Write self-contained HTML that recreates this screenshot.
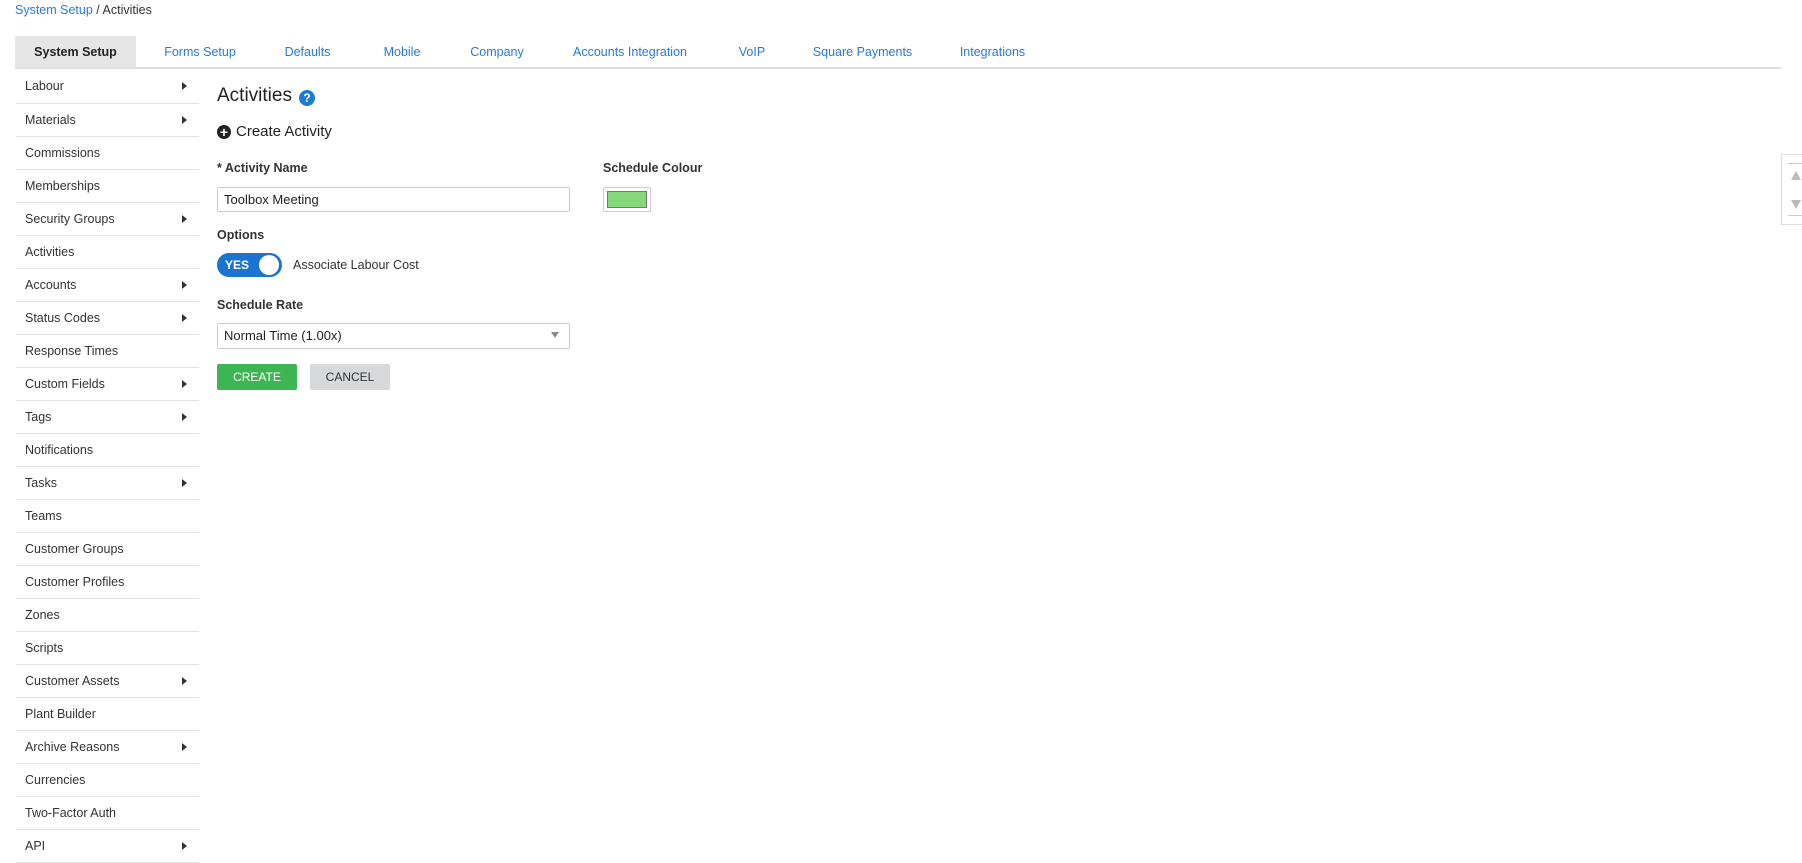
<!DOCTYPE html>
<html><head><meta charset="utf-8"><style>
*{box-sizing:border-box;margin:0;padding:0}
body{width:1802px;height:860px;overflow:hidden;background:#fff;font-family:"Liberation Sans",Arial,sans-serif;font-size:12.5px;color:#333;position:relative}
.a{position:absolute}
.bc{left:15px;top:3px;font-size:12.5px}
.bc span{color:#2a7ad5}
.tab{top:36px;height:32px;line-height:32px;font-size:12.5px;color:#2a7ad5;text-align:center}
.tabline{left:15px;top:67px;width:1766px;height:2px;background:#e0e0e0}
.side{left:16px;top:68px;width:183px}
.side div{height:33px;line-height:32px;border-bottom:1.5px solid #e3e3e3;padding-left:9px;position:relative;font-size:12.5px;color:#333}
.side div:first-child{height:36px;line-height:36px}
.side div.ar:after{content:"";position:absolute;left:166px;top:50%;margin-top:-4px;border-left:5px solid #333;border-top:4px solid transparent;border-bottom:4px solid transparent}
.lbl{font-weight:bold;font-size:12.5px;color:#333}
.inp{border:1px solid #ccc;border-radius:2px;height:25px;line-height:23px;padding-left:6px;font-size:13px;color:#222}
</style></head><body>
<div class="a bc"><span>System Setup</span> / Activities</div>
<div class="a" style="left:15px;top:36px;width:121px;height:32px;background:#e6e6e6"></div>
<div class="a tab" style="left:15px;width:121px;color:#222;font-weight:bold">System Setup</div>
<div class="a tab" style="left:160px;width:80px">Forms Setup</div>
<div class="a tab" style="left:280px;width:55px">Defaults</div>
<div class="a tab" style="left:377px;width:50px">Mobile</div>
<div class="a tab" style="left:465px;width:64px">Company</div>
<div class="a tab" style="left:570px;width:120px">Accounts Integration</div>
<div class="a tab" style="left:733px;width:38px">VoIP</div>
<div class="a tab" style="left:810px;width:105px">Square Payments</div>
<div class="a tab" style="left:955px;width:75px">Integrations</div>
<div class="a tabline"></div>
<div class="a side">
<div class="ar">Labour</div><div class="ar">Materials</div><div>Commissions</div><div>Memberships</div><div class="ar">Security Groups</div><div>Activities</div><div class="ar">Accounts</div><div class="ar">Status Codes</div><div>Response Times</div><div class="ar">Custom Fields</div><div class="ar">Tags</div><div>Notifications</div><div class="ar">Tasks</div><div>Teams</div><div>Customer Groups</div><div>Customer Profiles</div><div>Zones</div><div>Scripts</div><div class="ar">Customer Assets</div><div>Plant Builder</div><div class="ar">Archive Reasons</div><div>Currencies</div><div>Two-Factor Auth</div><div class="ar">API</div>
</div>
<div class="a" style="left:217px;top:85px;font-size:19px;color:#222">Activities</div>
<div class="a" style="left:299px;top:90px;width:16px;height:16px;border-radius:50%;background:#1e7bd2;color:#fff;font-weight:bold;font-size:12px;text-align:center;line-height:16px">?</div>
<div class="a" style="left:217px;top:125px;width:14px;height:14px;border-radius:50%;background:#222;color:#fff;font-weight:bold;font-size:14px;text-align:center;line-height:14px">+</div>
<div class="a" style="left:236px;top:123px;font-size:15px;color:#222">Create Activity</div>
<div class="a lbl" style="left:217px;top:161px">* Activity Name</div>
<div class="a inp" style="left:217px;top:187px;width:353px">Toolbox Meeting</div>
<div class="a lbl" style="left:603px;top:161px">Schedule Colour</div>
<div class="a" style="left:603px;top:187px;width:48px;height:25px;border:1px solid #ccc;border-radius:2px;padding:3px"><div style="width:100%;height:100%;background:#86d97a;border:1px solid #777"></div></div>
<div class="a lbl" style="left:217px;top:228px">Options</div>
<div class="a" style="left:217px;top:253px;width:65px;height:24px;border-radius:12px;background:#1b74d0;color:#fff;font-weight:bold;font-size:12px;line-height:24px;padding-left:8px">YES</div>
<div class="a" style="left:259px;top:255px;width:20px;height:20px;border-radius:50%;background:#fff"></div>
<div class="a" style="left:293px;top:258px">Associate Labour Cost</div>
<div class="a lbl" style="left:217px;top:298px">Schedule Rate</div>
<div class="a inp" style="left:217px;top:323px;width:353px;height:26px;line-height:24px">Normal Time (1.00x)</div>
<div class="a" style="left:551px;top:332px;border-top:6px solid #888;border-left:4px solid transparent;border-right:4px solid transparent"></div>
<div class="a" style="left:217px;top:364px;width:80px;height:26px;background:#3db552;border-radius:2px;color:#fff;font-size:12px;text-align:center;line-height:26px">CREATE</div>
<div class="a" style="left:310px;top:364px;width:80px;height:26px;background:#d6d8da;border-radius:2px;color:#333;font-size:12px;text-align:center;line-height:26px">CANCEL</div>
<div class="a" style="left:1781px;top:154px;width:21px;height:71px;border:1px solid #ddd;border-right:none"></div>
<div class="a" style="left:1788px;top:163px;width:14px;height:1px;background:#ccc"></div>
<div class="a" style="left:1788px;top:215px;width:14px;height:1px;background:#ccc"></div>
<div class="a" style="left:1791px;top:171px;border-bottom:9px solid #bbb;border-left:5px solid transparent;border-right:5px solid transparent"></div>
<div class="a" style="left:1791px;top:200px;border-top:9px solid #bbb;border-left:5px solid transparent;border-right:5px solid transparent"></div>
</body></html>
